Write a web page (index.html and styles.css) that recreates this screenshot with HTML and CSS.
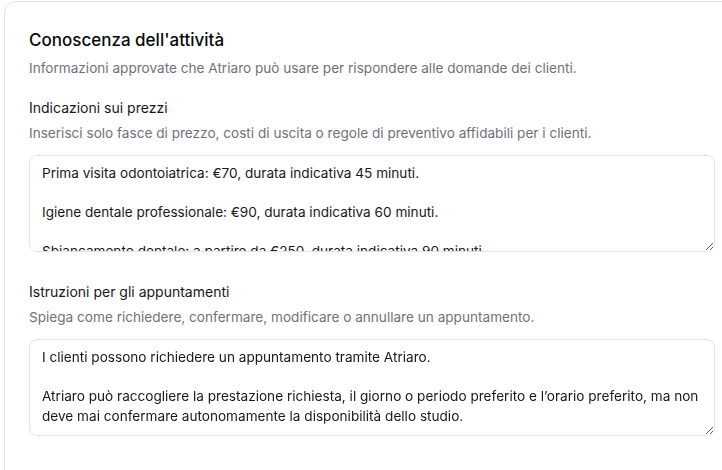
FILE: index.html
```html
<!DOCTYPE html>
<html lang="it">
<head>
  <meta charset="UTF-8">
  <title>Conoscenza dell'attività</title>
  <link rel="stylesheet" href="styles.css">
</head>
<body>

  <div class="pagina">
    <section class="scheda">
      <h2>Conoscenza dell'attività</h2>
      <p class="descrizione">Informazioni approvate che Atriaro può usare per rispondere alle domande dei clienti.</p>

      <div class="campo">
        <label for="prezzi">Indicazioni sui prezzi</label>
        <p class="aiuto">Inserisci solo fasce di prezzo, costi di uscita o regole di preventivo affidabili per i clienti.</p>
        <textarea id="prezzi">Prima visita odontoiatrica: €70, durata indicativa 45 minuti.

Igiene dentale professionale: €90, durata indicativa 60 minuti.

Sbiancamento dentale: a partire da €250, durata indicativa 90 minuti.</textarea>
      </div>

      <div class="campo">
        <label for="appuntamenti">Istruzioni per gli appuntamenti</label>
        <p class="aiuto">Spiega come richiedere, confermare, modificare o annullare un appuntamento.</p>
        <textarea id="appuntamenti">I clienti possono richiedere un appuntamento tramite Atriaro.

Atriaro può raccogliere la prestazione richiesta, il giorno o periodo preferito e l’orario preferito, ma non deve mai confermare autonomamente la disponibilità dello studio.</textarea>
      </div>
    </section>
  </div>

</body>
</html>
```

FILE: styles.css
```css
body {
  font-family: Inter, "Noto Sans", sans-serif;
  margin: 0;
  padding: 0;
  background-color: #ffffff;
  color: #18181b;
  overflow: hidden;
}

.pagina {
  padding: 1px 0 0 4px;
}

.scheda {
  width: 736px;
  box-sizing: border-box;
  padding: 24px 24px 60px;
  background: white;
  border: 1px solid #e4e4e7;
  border-radius: 12px;
}

h2 {
  margin: 0;
  font-size: 17px;
  line-height: 28px;
  font-weight: 500;
  color: #09090b;
}

.descrizione {
  margin: 4px 0 0;
  font-size: 13.6px;
  line-height: 20px;
  color: #71717a;
}

.campo {
  margin-top: 30px;
}

.campo:first-of-type {
  margin-top: 20px;
}

label {
  display: block;
  font-size: 14px;
  line-height: 20px;
  color: #18181b;
}

.aiuto {
  margin: 5px 0 0;
  font-size: 13.6px;
  line-height: 20px;
  color: #71717a;
}

textarea {
  display: block;
  width: 100%;
  height: 97px;
  box-sizing: border-box;
  margin-top: 12px;
  padding: 8px 12px;
  font-family: inherit;
  font-size: 13.6px;
  line-height: 19.5px;
  color: #18181b;
  border: 1px solid #e4e4e7;
  border-radius: 8px;
  resize: vertical;
  scrollbar-width: none;
  outline: none;
}
```
